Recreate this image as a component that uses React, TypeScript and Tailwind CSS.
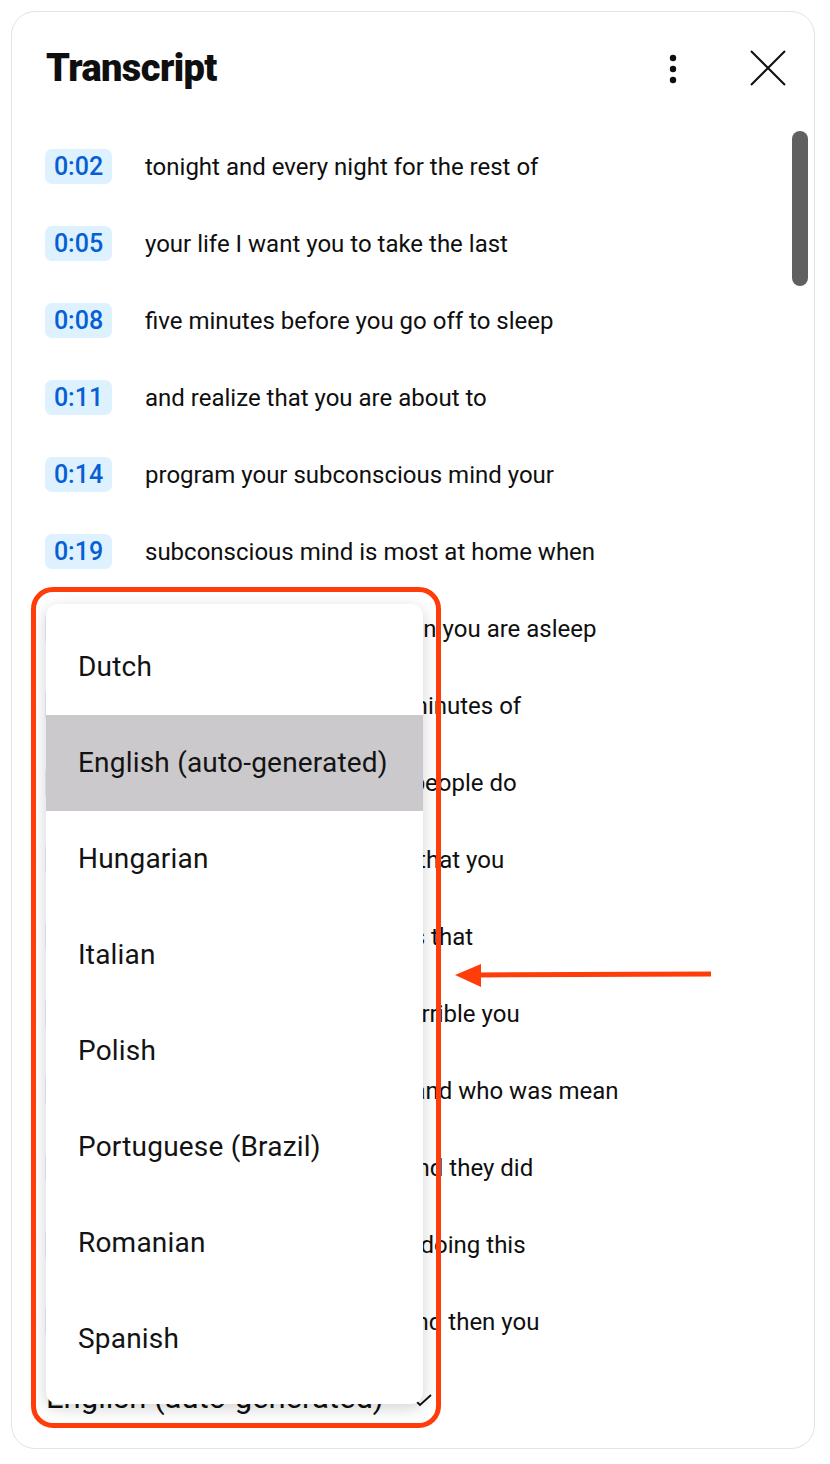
import React from "react";

const rows: { t: string; text: string }[] = [
  { t: "0:02", text: "tonight and every night for the rest of" },
  { t: "0:05", text: "your life I want you to take the last" },
  { t: "0:08", text: "five minutes before you go off to sleep" },
  { t: "0:11", text: "and realize that you are about to" },
  { t: "0:14", text: "program your subconscious mind your" },
  { t: "0:19", text: "subconscious mind is most at home when" },
  { t: "0:21", text: "conscious mind rests when you are asleep" },
  { t: "0:24", text: "don't waste the final five minutes of" },
  { t: "0:27", text: "the day thinking as most people do" },
  { t: "0:30", text: "and go over all the things that you" },
  { t: "0:33", text: "did wrong, or all the things that" },
  { t: "0:36", text: "went wrong today, how horrible you" },
  { t: "0:39", text: "were or who was unkind, and who was mean" },
  { t: "0:42", text: "to you and that they say and they did" },
  { t: "0:45", text: "and you are going to stop doing this" },
  { t: "0:48", text: "soothe your mind, body, and then you" },
];

const languages = [
  "Dutch",
  "English (auto-generated)",
  "Hungarian",
  "Italian",
  "Polish",
  "Portuguese (Brazil)",
  "Romanian",
  "Spanish",
];

const font = { fontFamily: "Roboto, 'Noto Sans', sans-serif" };

export default function App() {
  return (
    <div
      className="relative w-[830px] h-[1464px] bg-white pl-[11px] pr-[15px] pt-[11px] text-[#0f0f0f]"
      style={font}
    >
      {/* panel */}
      <div className="relative h-[1438px] rounded-[24px] border border-[#e3e3e3] flex flex-col overflow-hidden">
        <div className="h-[112px] shrink-0 flex items-center pl-[34px] pr-[28px]">
          <h1 className="text-[38px] font-black tracking-[-0.6px] leading-none">Transcript</h1>
          <div className="ml-auto flex items-center gap-[73px]">
            <svg width="8" height="30" viewBox="0 0 8 30" className="mt-[2px]">
              <circle cx="4" cy="4" r="3.2" fill="#0f0f0f" />
              <circle cx="4" cy="15" r="3.2" fill="#0f0f0f" />
              <circle cx="4" cy="26" r="3.2" fill="#0f0f0f" />
            </svg>
            <svg width="36" height="36" viewBox="0 0 36 36">
              <path d="M1 1 L35 35 M35 1 L1 35" stroke="#0f0f0f" strokeWidth="2" />
            </svg>
          </div>
        </div>

        <div className="flex-1 overflow-hidden pt-[4px]">
          {rows.map((r) => (
            <div key={r.t} className="h-[77px] flex items-center pl-[33px]">
              <span className="h-[35px] w-[67px] rounded-[7px] bg-[#def1ff] text-[#065fd4] text-[25px] font-medium flex items-center justify-center leading-none">
                {r.t}
              </span>
              <span className="ml-[33px] text-[24px] leading-none whitespace-nowrap">{r.text}</span>
            </div>
          ))}
        </div>

        <div className="h-[88px] shrink-0 pl-[34px] pt-[20px] flex items-start">
          <span className="w-[367px] text-[31px] leading-[36px] whitespace-nowrap">English (auto-generated)</span>
          <svg width="20" height="14" viewBox="0 0 20 14" className="mt-[13px]">
            <path d="M2 7 L7 12 L18 2" fill="none" stroke="#0f0f0f" strokeWidth="1.8" />
          </svg>
        </div>

        {/* scrollbar */}
        <div className="absolute right-[6px] top-[119px] w-[16px] h-[155px] rounded-full bg-[#606060]" />
      </div>

      {/* language menu */}
      <div className="absolute left-[46px] top-[604px] w-[377px] h-[800px] rounded-[12px] bg-white shadow-[0_4px_16px_rgba(0,0,0,0.18)] py-[15px]">
        {languages.map((l) => (
          <div
            key={l}
            className={
              "h-[96px] flex items-center pl-[32px] text-[28px] tracking-[0.2px] text-[#131313] " +
              (l === "English (auto-generated)" ? "bg-[#cbc9cc]" : "")
            }
          >
            {l}
          </div>
        ))}
      </div>

      {/* annotation */}
      <div className="absolute left-[31px] top-[587px] w-[410px] h-[841px] rounded-[22px] border-[5px] border-[#ff3d0a] pointer-events-none" />
      <svg
        className="absolute left-[450px] top-[960px]"
        width="270"
        height="30"
        viewBox="0 0 270 30"
      >
        <path d="M28 15 L261 14" stroke="#ff3d0a" strokeWidth="5" />
        <path d="M5 15 L31 4 L31 27 Z" fill="#ff3d0a" />
      </svg>
    </div>
  );
}
